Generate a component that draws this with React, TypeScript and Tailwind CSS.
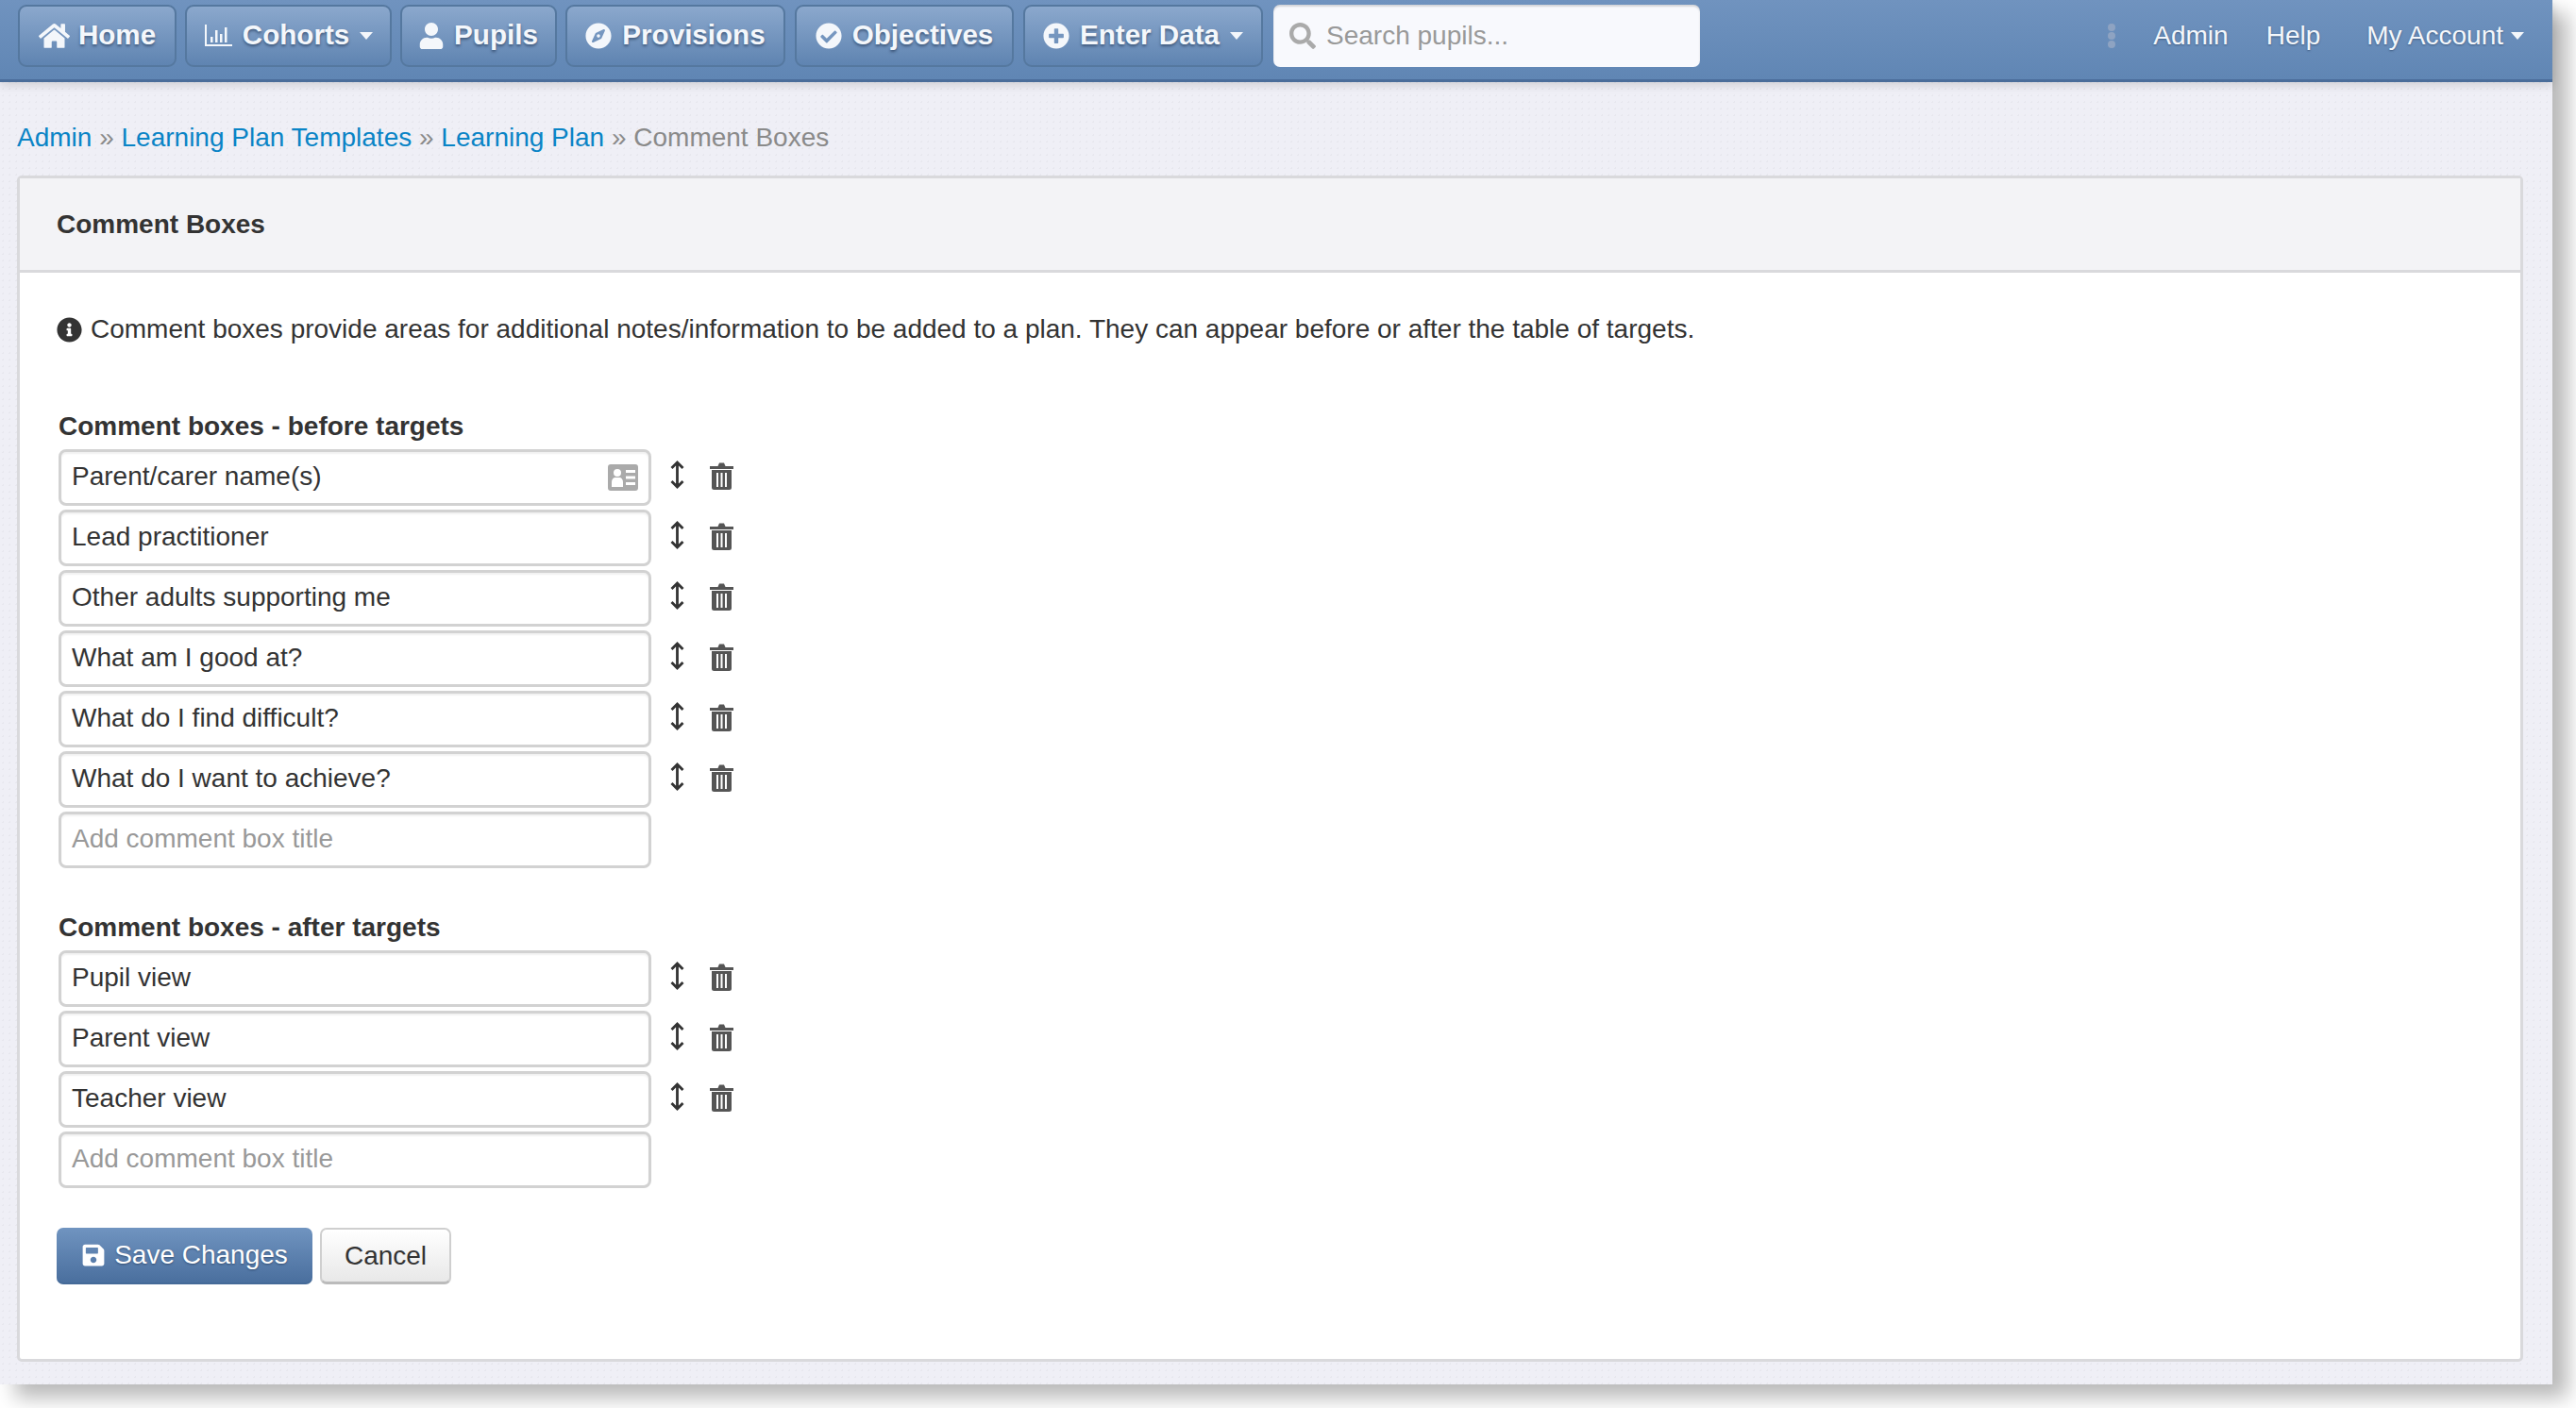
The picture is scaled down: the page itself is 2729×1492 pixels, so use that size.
import { FaCompass, FaCheckCircle, FaPlusCircle, FaSearch, FaInfoCircle, FaSave, FaHome, FaUser } from "react-icons/fa";

const font = "font-['Liberation_Sans',Arial,sans-serif]";

const navBtn =
  "flex h-[66px] items-center justify-center rounded-[9px] border-2 border-[#55789f] bg-gradient-to-b from-[#8ba8cd] to-[#5f84b1] pb-[1px] text-[29.6px] font-bold text-[#f4f7fb] [text-shadow:0_2px_3px_rgba(30,50,80,0.6)]";

const Caret = ({ className = "" }: { className?: string }) => (
  <span className={`inline-block h-0 w-0 border-x-[7.5px] border-t-[8px] border-x-transparent border-t-current ${className}`}></span>
);

const ChartIcon = () => (
  <svg viewBox="0 0 30 24" className="h-[24px] w-[30px]" fill="currentColor">
    <path d="M1 0h2v21h27v2H1z" />
    <path d="M7 13h2.500v6H7zM12 6h2.500v13H12zM17 10h2.500v9H17zM22 3h2.500v16H22z" />
  </svg>
);

const ArrowsIcon = () => (
  <svg viewBox="0 0 15 30" className="h-[30px] w-[15px]" fill="none" stroke="#333" strokeWidth="2.800">
    <path d="M7.500 2v26M1.500 8l6-6 6 6M1.500 22l6 6 6-6" />
  </svg>
);

const TrashIcon = () => (
  <svg viewBox="0 0 25 29" className="h-[29px] w-[25px]" fill="#555">
    <path d="M0 4h8.500l1.500-3.500h5L16.500 4H25v3H0z" />
    <path d="M2 8h21v18.500a2.500 2.500 0 0 1-2.500 2.500h-16A2.500 2.500 0 0 1 2 26.500zM7 11v15h2V11zM11.500 11v15h2V11zM16 11v15h2V11z" fillRule="evenodd" />
  </svg>
);

const CardIcon = () => (
  <svg viewBox="0 0 32 28" className="h-[28px] w-[32px]" fill="#aaa">
    <path
      fillRule="evenodd"
      d="M3 0h26a3 3 0 0 1 3 3v22a3 3 0 0 1-3 3H3a3 3 0 0 1-3-3V3a3 3 0 0 1 3-3zM10 5a4 4 0 1 0 0 8 4 4 0 0 0 0-8zM4 24h12v-5c0-3-2-5-3.500-5h-5C6 14 4 16 4 19zM19 6v3h10V6zM19 12.500v3h10v-3zM19 19v3h10v-3z"
    />
  </svg>
);

const beforeRows = [
  "Parent/carer name(s)",
  "Lead practitioner",
  "Other adults supporting me",
  "What am I good at?",
  "What do I find difficult?",
  "What do I want to achieve?",
];

const afterRows = ["Pupil view", "Parent view", "Teacher view"];

const inputClass =
  "h-[60px] w-full rounded-[8px] border-[3px] border-[#d2d2d2] bg-white px-[11px] pb-[2px] text-[28px] text-[#333] shadow-[inset_0_2px_2px_rgba(0,0,0,0.06)] outline-none placeholder:text-[#999]";

const Row = ({ title, card }: { title: string; card?: boolean }) => (
  <div className="flex h-[60px] items-center">
    <div className="relative w-[628px]">
      <input className={inputClass} defaultValue={title} />
      {card && (
        <span className="absolute right-[14px] top-[16px]">
          <CardIcon />
        </span>
      )}
    </div>
    <div className="ml-[20px] flex w-[15px] -translate-y-[3px] justify-center">
      <ArrowsIcon />
    </div>
    <div className="ml-[27px] flex -translate-y-[2px]">
      <TrashIcon />
    </div>
  </div>
);

const Section = ({ label, rows }: { label: string; rows: string[] }) => (
  <div className="ml-[2px]">
    <h4 className="mb-[8px] h-[32px] text-[28px] font-bold leading-[32px] text-[#333]">{label}</h4>
    <div className="flex flex-col gap-[4px]">
      {rows.map((row, i) => (
        <Row key={row} title={row} card={row === "Parent/carer name(s)" && i === 0} />
      ))}
      <div className="w-[628px]">
        <input className={inputClass} placeholder="Add comment box title" />
      </div>
    </div>
  </div>
);

export default function App() {
  return (
    <div className={`min-h-[1492px] w-[2729px] bg-white ${font}`}>
      <div className="flex h-[1467px] w-[2704px] flex-col bg-[#efeff6] bg-[radial-gradient(#e7e7ee_1px,transparent_1px)] bg-[length:7px_7px] shadow-[16px_14px_20px_rgba(0,0,0,0.28)]">
        <header className="flex h-[87px] shrink-0 items-start gap-[9px] border-b-[3px] border-[#4a6d9a] bg-gradient-to-b from-[#7093bf] to-[#6086b4] pl-[19px] pt-[5px] shadow-[0_3px_10px_rgba(0,0,0,0.14)]">
          <a className={`${navBtn} w-[168px] gap-[9px]`}>
            <FaHome className="h-[30px] w-[33px]" />
            Home
          </a>
          <a className={`${navBtn} w-[219px] gap-[11px]`}>
            <ChartIcon />
            Cohorts
            <Caret />
          </a>
          <a className={`${navBtn} w-[166px] gap-[11px]`}>
            <FaUser className="h-[28px] w-[26px]" />
            Pupils
          </a>
          <a className={`${navBtn} w-[233px] gap-[11px]`}>
            <FaCompass className="h-[28px] w-[28px]" />
            Provisions
          </a>
          <a className={`${navBtn} ml-[1px] w-[232px] gap-[11px]`}>
            <FaCheckCircle className="h-[28px] w-[28px]" />
            Objectives
          </a>
          <a className={`${navBtn} ml-[1px] w-[254px] gap-[11px]`}>
            <FaPlusCircle className="h-[28px] w-[28px]" />
            Enter Data
            <Caret />
          </a>
          <div className="ml-[2px] flex h-[66px] w-[452px] items-center gap-[11px] rounded-[7px] bg-[#f8f9fd] pb-[1px] pl-[17px] shadow-[inset_0_2px_2px_rgba(0,0,0,0.15)]">
            <FaSearch className="h-[28px] w-[28px] text-[#aaa]" />
            <span className="text-[28px] text-[#999]">Search pupils...</span>
          </div>
          <div className="ml-auto flex h-[66px] items-center pb-[1px] pr-[30px] text-[28px] text-[#f4f7fb] [text-shadow:0_1px_2px_rgba(30,50,80,0.5)]">
            <div className="mr-[40px] flex flex-col gap-[1px]">
              <span className="h-[8px] w-[8px] rounded-full bg-[#8ea3c2]"></span>
              <span className="h-[8px] w-[8px] rounded-full bg-[#8ea3c2]"></span>
              <span className="h-[8px] w-[8px] rounded-full bg-[#8ea3c2]"></span>
            </div>
            <a>Admin</a>
            <a className="ml-[40px]">Help</a>
            <a className="ml-[49px] flex items-center gap-[8px]">
              My Account
              <Caret />
            </a>
          </div>
        </header>

        <nav className="mt-[43px] h-[32px] pl-[18px] text-[28px] leading-[32px] text-[#8a8a8a]">
          <a className="text-[#0a84c6]">Admin</a> »{" "}
          <a className="text-[#0a84c6]">Learning Plan Templates</a> »{" "}
          <a className="text-[#0a84c6]">Learning Plan</a> » Comment Boxes
        </nav>

        <section className="ml-[18px] mt-[24px] h-[1257px] w-[2655px] rounded-[5px] border-[3px] border-[#d9d9dc] bg-white">
          <div className="flex h-[100px] items-center border-b-[3px] border-[#d9d9dc] bg-[#f3f3f6] pl-[39px] text-[28px] font-bold text-[#333]">
            Comment Boxes
          </div>
          <div className="pl-[39px] pt-[44px]">
            <p className="flex h-[32px] items-center gap-[9px] text-[28px] leading-[32px] text-[#333]">
              <FaInfoCircle className="h-[27px] w-[27px]" />
              Comment boxes provide areas for additional notes/information to be added to a plan. They can appear before or after the table of targets.
            </p>
            <div className="mt-[71px]">
              <Section label="Comment boxes - before targets" rows={beforeRows} />
            </div>
            <div className="mt-[47px]">
              <Section label="Comment boxes - after targets" rows={afterRows} />
            </div>
            <div className="mt-[42px] flex gap-[8px]">
              <button className="flex h-[60px] w-[271px] items-center justify-center gap-[9px] rounded-[7px] border-b-2 border-[#456a98] bg-gradient-to-b from-[#7094c0] to-[#4a6f9e] text-[28px] text-white [text-shadow:0_1px_2px_rgba(30,50,80,0.6)]">
                <FaSave className="h-[26px] w-[26px]" />
                Save Changes
              </button>
              <button className="h-[60px] w-[139px] rounded-[7px] border-[2px] border-b-[3px] border-[#cfcfcf] border-b-[#bbb] bg-gradient-to-b from-white to-[#e8e8e8] text-[28px] text-[#333]">
                Cancel
              </button>
            </div>
          </div>
        </section>
      </div>
    </div>
  );
}
